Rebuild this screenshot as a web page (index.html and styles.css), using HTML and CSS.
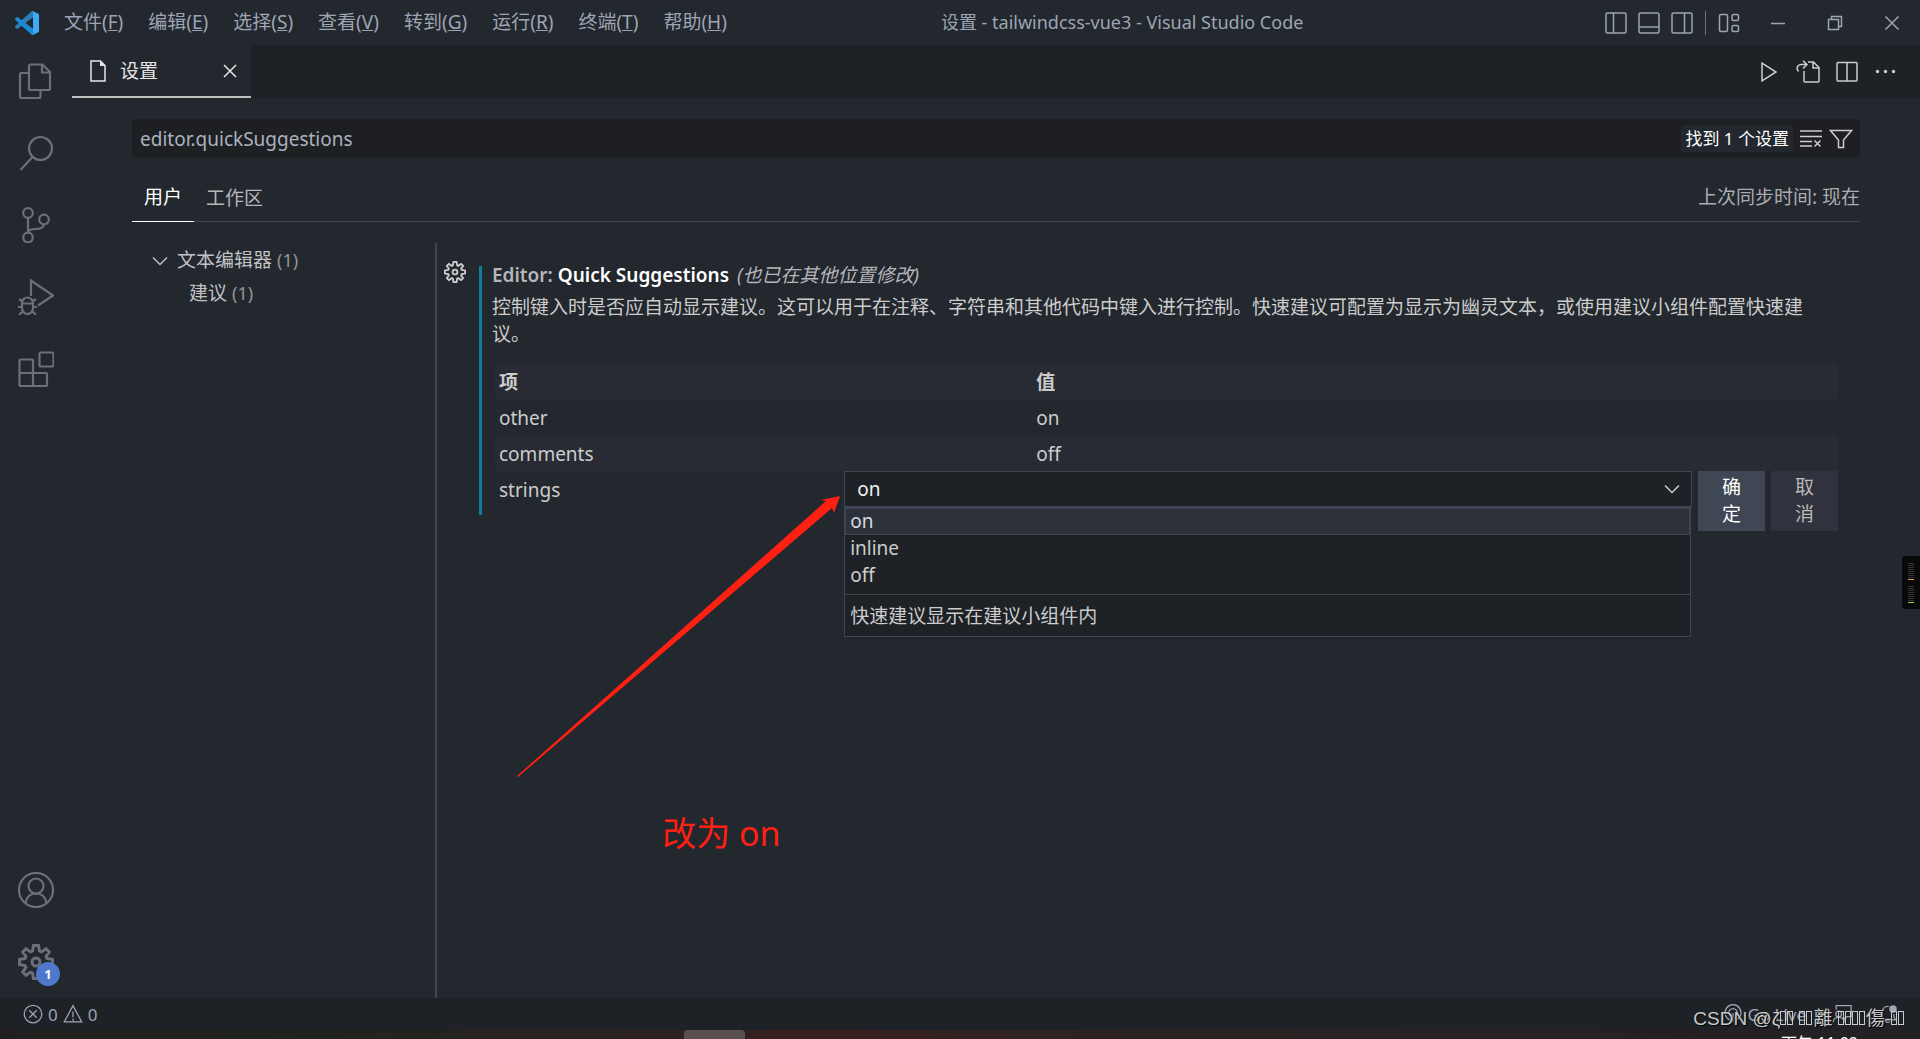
FILE: index.html
```html
<!DOCTYPE html>
<html lang="zh-CN">
<head>
<meta charset="utf-8">
<title>设置 - tailwindcss-vue3 - Visual Studio Code</title>
<link rel="stylesheet" href="styles.css">
</head>
<body>
<div class="window">
  <header class="titlebar">
    <svg class="logo" viewBox="0 0 100 100" aria-hidden="true">
      <path fill="#2a7fb8" d="M96 11 75 1a6 6 0 0 0-7 1L1 63a4 4 0 0 0 0 6l6 5a4 4 0 0 0 5 0L93 13c3-2 7 0 7 3z"/>
      <path fill="#1a8ad4" d="M96 89 75 99a6 6 0 0 1-7-1L1 37a4 4 0 0 1 0-6l6-5a4 4 0 0 1 5 0l81 61c3 2 7 0 7-3z"/>
      <path fill="#3fa9f5" d="M75 99a6 6 0 0 1-7-1c3 3 7 1 7-3V5c0-4-4-6-7-3a6 6 0 0 1 7-1l21 10a6 6 0 0 1 4 6v66a6 6 0 0 1-4 6z"/>
    </svg>
    <nav class="menu">
      <button>文件(<u>F</u>)</button>
      <button>编辑(<u>E</u>)</button>
      <button>选择(<u>S</u>)</button>
      <button>查看(<u>V</u>)</button>
      <button>转到(<u>G</u>)</button>
      <button>运行(<u>R</u>)</button>
      <button>终端(<u>T</u>)</button>
      <button>帮助(<u>H</u>)</button>
    </nav>
    <div class="title">设置 - tailwindcss-vue3 - Visual Studio Code</div>
    <div class="layout-controls">
      <button aria-label="切换主侧栏"><svg class="icon" viewBox="0 0 24 24"><rect x="2" y="2" width="20" height="20" rx="1.500"/><path d="M9.500 2v20"/></svg></button>
      <button aria-label="切换面板"><svg class="icon" viewBox="0 0 24 24"><rect x="2" y="2" width="20" height="20" rx="1.500"/><path d="M2 16h20"/></svg></button>
      <button aria-label="切换辅助侧栏"><svg class="icon" viewBox="0 0 24 24"><rect x="2" y="2" width="20" height="20" rx="1.500"/><path d="M14.500 2v20"/></svg></button>
      <span class="divider"></span>
      <button aria-label="自定义布局"><svg class="icon" viewBox="0 0 24 24"><rect x="2.500" y="3.500" width="8" height="17" rx="1.500"/><rect x="15" y="3.500" width="6.500" height="6" rx="1.500"/><rect x="15" y="14.500" width="6.500" height="6" rx="1.500"/></svg></button>
    </div>
    <div class="window-controls">
      <button aria-label="最小化"><svg class="icon" viewBox="0 0 24 24"><path d="M5 12.500h14"/></svg></button>
      <button aria-label="还原"><svg class="icon" viewBox="0 0 24 24"><rect x="5.500" y="8.500" width="10" height="10"/><path d="M8.500 8V5.500h10v10H16"/></svg></button>
      <button aria-label="关闭"><svg class="icon" viewBox="0 0 24 24"><path d="m5.500 5.500 13 13m0-13-13 13"/></svg></button>
    </div>
  </header>

  <div class="workbench">
    <nav class="activity">
      <button aria-label="资源管理器"><svg class="icon" viewBox="0 0 36 36"><path d="M12.500 1.500h12L32 9v16.500a1.500 1.500 0 0 1-1.500 1.500h-18a1.500 1.500 0 0 1-1.500-1.500V3a1.500 1.500 0 0 1 1.500-1.500zM24 2v7.500h7.500M11 10H3.500A1.500 1.500 0 0 0 2 11.500v22A1.500 1.500 0 0 0 3.500 35H21a1.500 1.500 0 0 0 1.500-1.500V27"/></svg></button>
      <button aria-label="搜索"><svg class="icon" viewBox="0 0 36 36"><circle cx="22.500" cy="13.500" r="11.500"/><path d="M14.500 22 2.500 35"/></svg></button>
      <button aria-label="源代码管理"><svg class="icon" viewBox="0 0 36 36"><circle cx="10" cy="6" r="4.800"/><circle cx="26" cy="12.500" r="4.800"/><circle cx="10" cy="30.500" r="4.800"/><path d="M10 11v14.500M26 17.500c-1 4-4 4.500-8 4.500-5 0-8 1-8 4"/></svg></button>
      <button aria-label="运行和调试"><svg class="icon" viewBox="0 0 36 36"><path d="M13 17V1.500l22 15-15 10"/><path d="M4 24a5.500 5.500 0 0 1 11 0v5a5.500 6 0 0 1-11 0zM4 24.500h11M0 28h4m11 0h4M1 20l4 3m13-3-4 3M1 36l4-4m13 4-4-4"/></svg></button>
      <button aria-label="扩展"><svg class="icon" viewBox="0 0 36 36"><path d="M2.500 8.500H14a1 1 0 0 1 1 1V22h13a1 1 0 0 1 1 1v11a1 1 0 0 1-1 1H2.500a1 1 0 0 1-1-1V9.500a1 1 0 0 1 1-1zM1.500 22H15v13"/><rect x="21.500" y="1.500" width="14" height="14" rx="1.500"/></svg></button>
      <span class="spacer"></span>
      <button aria-label="帐户"><svg class="icon" viewBox="0 0 36 36"><circle cx="18" cy="18" r="17"/><circle cx="18" cy="14" r="7.500"/><path d="M7.500 31c1-6 5-9.500 10.500-9.500S27.500 25 28.500 31"/></svg></button>
      <button aria-label="管理"><svg class="icon gear" viewBox="0 0 36 36"><path d="M15.500 1.500h5l1 5.500 2 .9L28 4.700 31.300 8 28.100 12.500l.9 2 5.500 1v5l-5.500 1-.9 2 3.200 4.500-3.300 3.300-4.500-3.200-2 .9-1 5.500h-5l-1-5.500-2-.9L8 31.300 4.700 28l3.200-4.500-.9-2-5.500-1v-5l5.500-1 .9-2L4.700 8 8 4.700l4.500 3.200 2-.9z"/><circle cx="18" cy="18" r="4"/></svg><span class="badge">1</span></button>
    </nav>

    <main class="editor">
      <div class="tabbar">
        <div class="tab">
          <svg class="icon file" viewBox="0 0 24 24"><path d="M5 2h9.500L19 6.500V22H5z"/><path class="solid" d="M14 2v5h5z"/></svg>
          <span>设置</span>
          <button aria-label="关闭标签"><svg class="icon" viewBox="0 0 24 24"><path d="m6 6 12 12M18 6 6 18"/></svg></button>
        </div>
        <div class="tab-actions">
          <button aria-label="运行"><svg class="icon" viewBox="0 0 24 24"><path d="M5 3v18l14-9z"/></svg></button>
          <button aria-label="打开设置(json)"><svg class="icon" viewBox="0 0 24 24"><path d="M8 11v10a1 1 0 0 0 1 1h13a1 1 0 0 0 1-1V7.500L17.500 2H12M17 2v6h6M2.500 11.500C-.5 8 2 4.500 5 4.500h5M7 .8l4 3.800-4 3.900"/></svg></button>
          <button aria-label="拆分编辑器"><svg class="icon" viewBox="0 0 24 24"><rect x="2" y="2.500" width="20" height="18.500" rx="1"/><path d="M12 2.500V21"/></svg></button>
          <button aria-label="更多操作"><svg class="icon" viewBox="0 0 24 24"><g class="solid"><circle cx="3.500" cy="11.500" r="1.700"/><circle cx="11.500" cy="11.500" r="1.700"/><circle cx="19.500" cy="11.500" r="1.700"/></g></svg></button>
        </div>
      </div>

      <div class="settings">
        <div class="search">
          <input type="text" aria-label="搜索设置" value="editor.quickSuggestions">
          <span class="count">找到 1 个设置</span>
          <button aria-label="清除设置搜索输入"><svg class="icon" viewBox="0 0 24 24"><path d="M1 4h22M1 9.500h22M1 14.500h12M1 19h12M15.500 13.500l6 6m0-6-6 6"/></svg></button>
          <button aria-label="筛选设置"><svg class="icon" viewBox="0 0 24 24"><path d="M1.500 3.500h21l-8 9.500v7.500h-5V13z"/></svg></button>
        </div>
        <div class="scopes">
          <button class="scope active">用户</button>
          <button class="scope">工作区</button>
          <span class="sync">上次同步时间: 现在</span>
        </div>
        <div class="body">
          <nav class="toc">
            <a class="group" href="#editor"><svg class="icon" viewBox="0 0 24 24"><path d="m5 8.500 7 7 7-7"/></svg><span>文本编辑器</span> <small>(1)</small></a>
            <a class="child" href="#suggest"><span>建议</span> <small>(1)</small></a>
          </nav>
          <section class="results">
            <button class="item-gear" aria-label="更多操作"><svg class="icon" viewBox="0 0 36 36"><path d="M15.500 1.500h5l1 5.500 2 .9L28 4.700 31.300 8 28.100 12.500l.9 2 5.500 1v5l-5.500 1-.9 2 3.200 4.500-3.300 3.300-4.500-3.200-2 .9-1 5.500h-5l-1-5.500-2-.9L8 31.300 4.700 28l3.200-4.500-.9-2-5.500-1v-5l5.500-1 .9-2L4.700 8 8 4.700l4.500 3.200 2-.9z"/><circle cx="18" cy="18" r="4"/></svg></button>
            <article class="item">
              <h2><span class="category">Editor: </span>Quick Suggestions<em>(也已在其他位置修改)</em></h2>
              <p>控制键入时是否应自动显示建议。这可以用于在注释、字符串和其他代码中键入进行控制。快速建议可配置为显示为幽灵文本，或使用建议小组件配置快速建议。</p>
              <table>
                <colgroup><col class="key"><col class="gap"><col></colgroup>
                <tr class="shade"><th colspan="2">项</th><th>值</th></tr>
                <tr><td colspan="2">other</td><td>on</td></tr>
                <tr class="shade"><td colspan="2">comments</td><td>off</td></tr>
                <tr>
                  <td><label for="strings">strings</label></td>
                  <td class="edit" colspan="2">
                    <div class="edit-row">
                      <div class="dropdown">
                        <select id="strings"><option>on</option><option>inline</option><option>off</option></select>
                        <svg class="icon" viewBox="0 0 24 24"><path d="m5 8.500 7 7 7-7"/></svg>
                        <div class="popup">
                          <ul>
                            <li class="selected">on</li>
                            <li>inline</li>
                            <li>off</li>
                          </ul>
                          <div class="detail">快速建议显示在建议小组件内</div>
                        </div>
                        <svg class="arrow" viewBox="0 0 324 282" aria-hidden="true"><path d="M0 280 309 5 304 4 323 0 317 17 315 12 1 281z"/></svg>
                        <div class="note">改为 on</div>
                      </div>
                      <button class="ok">确定</button>
                      <button class="cancel">取消</button>
                    </div>
                  </td>
                </tr>
              </table>
            </article>
          </section>
        </div>
      </div>
    </main>
  </div>

  <footer class="statusbar">
    <button class="problems">
      <svg class="icon" viewBox="0 0 24 24"><circle cx="12" cy="12" r="10.500"/><path d="m7.500 7.500 9 9m0-9-9 9"/></svg>0
      <svg class="icon" viewBox="0 0 24 24"><path d="M12 2 1.500 21.500h21zM12 9v7m0 1.500V20"/></svg>0
    </button>
    <div class="status-right">
      <button><svg class="icon" viewBox="0 0 24 24"><path d="M8 19a9.500 9.500 0 1 1 8 0M9 14.500a5 5 0 1 1 6 0M12 11v11"/></svg>Go Live</button>
      <button aria-label="反馈"><svg class="icon" viewBox="0 0 24 24"><path d="M5 7V2h18v13h-5l-4 4v-4"/><circle cx="8" cy="12" r="3.500"/><path d="M1.500 22c0-8 13-8 13 0"/></svg></button>
      <button aria-label="通知"><svg class="icon" viewBox="0 0 24 24"><path d="M13 3C8 2 5 6 5 10v5l-3 4h19l-2-4v-3M9.500 19.500a2.500 2.500 0 0 0 5 0"/><circle class="solid" cx="18" cy="6" r="4.500"/></svg></button>
    </div>
  </footer>
  <div class="taskbar"><span class="task"></span><span class="clock">下午 11:09</span></div>

  <div class="meter"><i></i><i></i><i></i><i></i><i></i><i></i><i></i><i></i><i class="orange"></i><b></b><i></i><i></i><i></i><i></i><i></i><i></i><i></i><i></i><i class="green"></i></div>
  <div class="watermark">CSDN @ζ<s></s><s></s> <s></s><s></s>離 <s></s><s></s><s></s><s></s>傷-<s></s><s></s></div>
</div>
</body>
</html>
```
FILE: styles.css
```css
* { box-sizing: border-box; }

body {
  margin: 0;
  background: #23272e;
  color: #cccccc;
  font: 19px/27px "Noto Sans", "Noto Sans CJK SC", sans-serif;
}

button, input, select {
  margin: 0;
  padding: 0;
  border: 0;
  background: none;
  color: inherit;
  font: inherit;
}

button { display: flex; align-items: center; justify-content: center; }

.icon {
  display: block;
  flex: none;
  width: 24px;
  height: 24px;
  fill: none;
  stroke: currentColor;
  stroke-width: 1.5;
}
.solid { fill: currentColor; stroke: none; }

.window {
  position: relative;
  display: flex;
  flex-direction: column;
  height: 100vh;
  overflow: hidden;
}

/* Title bar */
.titlebar {
  display: grid;
  grid-template-columns: auto auto 1fr auto auto;
  align-items: center;
  height: 45px;
  flex: none;
  padding-left: 15px;
  color: #9da5b4;
}
.logo { width: 24px; height: 28px; }
.menu { display: flex; gap: 1px; padding-left: 13px; }
.menu button { padding: 0 12px; }
.title { padding-left: 202px; font-size: 18px; white-space: nowrap; }
.layout-controls { display: flex; align-items: center; gap: 9px; padding-right: 8px; }
.divider { width: 1px; height: 24px; margin: 0 2px; background: #6b717d; }
.window-controls { display: flex; }
.window-controls button { width: 57px; height: 45px; }

/* Workbench */
.workbench { display: flex; flex: 1; min-height: 0; }
.activity { display: flex; flex-direction: column; width: 72px; color: #6b6f78; }
.activity button { position: relative; height: 72px; }
.activity .icon { width: 36px; height: 36px; stroke-width: 2.2; }
.activity .gear { stroke-width: 3; }
.spacer { flex: 1; }
.badge {
  position: absolute;
  right: 12px;
  bottom: 12px;
  width: 24px;
  height: 24px;
  border-radius: 50%;
  background: #4d78cc;
  color: #f8fafd;
  font-size: 13px;
  font-weight: 700;
  line-height: 24px;
}
.editor { display: flex; flex-direction: column; flex: 1; min-width: 0; }
.tabbar {
  display: flex;
  justify-content: space-between;
  height: 53px;
  flex: none;
  background: #1e2227;
}
.tab {
  display: flex;
  align-items: center;
  width: 179px;
  padding: 0 9px 0 14px;
  border-bottom: 2px solid #c0c0c0;
  background: #23272e;
  color: #e6e6e6;
}
.tab span { flex: 1; padding: 2px 0 0 10px; }
.tab-actions { display: flex; align-items: center; gap: 15px; padding-right: 22px; }

/* Settings editor */
.settings { display: flex; flex-direction: column; flex: 1; padding: 21px 60px 0; min-height: 0; }
.search {
  display: flex;
  align-items: center;
  height: 39px;
  flex: none;
  gap: 6px;
  padding: 0 7px 0 8px;
  background: #1d1f23;
}
.search input { flex: 1; min-width: 0; padding-top: 2px; color: #abb2bf; outline: 0; }
.count {
  padding: 0 4px;
  border-radius: 3px;
  background: #23272e;
  color: #ffffff;
  font-size: 17px;
}
.scopes {
  display: flex;
  height: 64px;
  flex: none;
  padding-top: 14px;
  border-bottom: 1px solid #3e4452;
}
.scope { height: 50px; padding: 2px 12px 0; color: #b5b7ba; }
.scope.active { border-bottom: 1px solid #ffffff; color: #ffffff; }
.sync { margin-left: auto; line-height: 50px; color: #aaacaf; }
.body { display: flex; flex: 1; margin-top: 21px; }
.toc { display: flex; flex-direction: column; width: 303px; padding: 1px 0 0 16px; line-height: 33px; }
.toc a { display: flex; align-items: center; color: #c0c2c4; text-decoration: none; }
.toc span { padding: 0 5px; }
.toc small { font-size: 18px; color: #929598; }
.toc .child { padding-left: 36px; }
.results {
  display: flex;
  flex: 1;
  align-items: flex-start;
  min-width: 0;
  padding: 23px 22px 0 7px;
  border-left: 2px solid #3e4452;
}
.item-gear { margin: -6px 13px 0 0; }
.item-gear .icon { width: 22px; height: 24px; stroke-width: 3; }
.item { flex: 1; min-width: 0; padding: 0 0 8px 10px; border-left: 3px solid #0e7d9d; }
h2 { margin: 0; color: #ffffff; font-size: 19px; font-weight: 600; line-height: 18px; }
.category { color: #b4b6b9; }
h2 em { padding-left: 8px; color: #b4b6b9; font-weight: 400; }
.item p { margin: 10px 0 15px; }

table { width: calc(100% - 3px); margin-left: 3px; border-spacing: 0; table-layout: fixed; }
.key { width: 26%; }
.gap { width: 14%; }
.shade { background: #282b33; }
th, td { height: 36px; padding: 2px 4px 0; text-align: left; }
td.edit { padding: 0; vertical-align: top; }
.edit-row { display: flex; align-items: flex-start; gap: 6px; height: 36px; }
.dropdown { position: relative; flex: 1; }
.dropdown > select {
  display: block;
  width: 100%;
  height: 37px;
  padding: 0 12px;
  border: 1px solid #3e4452;
  background: #1e2227;
  color: #f0f0f0;
  appearance: none;
}
.dropdown > .icon { position: absolute; top: 6px; right: 8px; }
.edit-row > button { width: 67px; height: 60px; padding: 0 20px; white-space: normal; }
.ok { background: #404754; color: #ffffff; }
.cancel { background: #30333d; color: #b8b8b8; }

.popup {
  position: absolute;
  top: 35px;
  left: 0;
  right: 1px;
  border: 1px solid #3e4452;
  border-top-width: 2px;
  background: #1e2227;
}
.popup ul { margin: 0; padding: 0 0 5px; border-bottom: 1px solid #454545; list-style: none; }
.popup li { padding: 0 5px; }
.popup .selected {
  padding: 0 4px;
  border: 1px solid #3e4452;
  background: #2c313a;
  color: #d7dae0;
  line-height: 25px;
}
.detail { padding: 8px 5px 6px; }

/* Annotation over the editor */
.arrow { position: absolute; right: calc(100% + 3px); top: 25px; width: 324px; height: 282px; fill: #ff2013; }
.note {
  position: absolute;
  top: 335px;
  left: -182px;
  color: #ff2013;
  font-size: 34px;
  line-height: 54px;
  white-space: nowrap;
}

/* Status bar and desktop edge */
.statusbar {
  display: flex;
  justify-content: space-between;
  height: 32px;
  flex: none;
  padding: 0 22px 0 23px;
  background: #1e2227;
  color: #9da5b4;
  font-size: 17px;
}
.statusbar .icon { width: 20px; height: 20px; }
.problems { gap: 5px; }
.status-right { display: flex; gap: 26px; }
.status-right button { gap: 4px; }
.taskbar {
  position: relative;
  height: 9px;
  flex: none;
  overflow: hidden;
  background: linear-gradient(90deg, #231f20, #20231f 15%, #2c2221 35%, #38201e 42%, #2a2223 60%, #232023);
}
.task {
  position: absolute;
  left: 684px;
  width: 61px;
  height: 20px;
  border-radius: 4px;
  background: #5a5050;
}
.clock { position: absolute; top: 0; right: 62px; color: #ffffff; font-size: 16px; }

.meter {
  position: absolute;
  top: 556px;
  right: 0;
  display: flex;
  flex-direction: column;
  gap: 1px;
  width: 18px;
  height: 53px;
  padding: 7px 6px;
  border-radius: 3px 0 0 3px;
  background: #08090a;
}
.meter i { height: 1px; flex: none; background: #303234; }
.meter b { height: 4px; flex: none; }
.meter .orange { background: #f0a030; }
.meter .green { background: #86e01e; }

.watermark {
  position: absolute;
  right: 15px;
  bottom: 7px;
  color: #c8cacc;
  font-family: "Liberation Sans", "Noto Sans CJK TC", sans-serif;
  font-size: 19px;
  white-space: nowrap;
  text-shadow: 1px 1px 1px #000000;
}
.watermark s {
  display: inline-block;
  width: 6px;
  height: 14px;
  margin-right: 1px;
  border: 1px solid #c8cacc;
}
```
